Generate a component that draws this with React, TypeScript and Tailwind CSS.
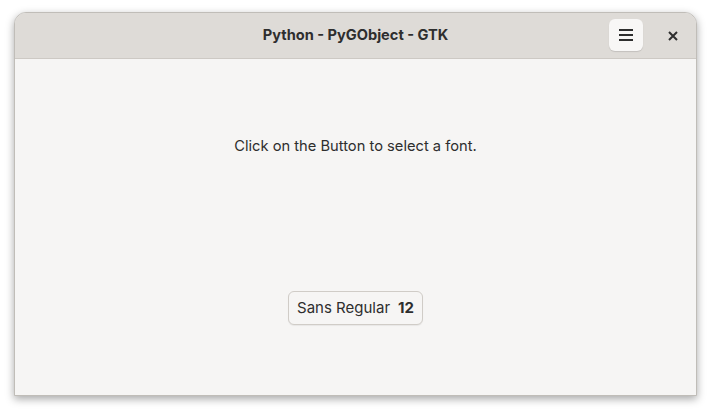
import React from "react";

const App: React.FC = () => {
  return (
    <div className="w-[711px] h-[413px] bg-white pt-[12px] pl-[14px] font-['Inter',sans-serif]">
      <div className="w-[683px] h-[384px] rounded-t-[12px] overflow-hidden flex flex-col bg-[#f6f5f4] border border-[#c0bdb8] shadow-[0_3px_9px_rgba(0,0,0,0.35)]">
        <header className="h-[46px] shrink-0 bg-[#dedbd7] border-b border-[#cdc9c4] flex items-center relative">
          <h1 className="w-full text-center text-[14.6px] font-bold text-[#2e2e2e]">
            Python - PyGObject - GTK
          </h1>
          <button className="absolute left-[594px] top-[6px] w-[34px] h-[32px] rounded-[6px] bg-[#f8f7f6] shadow-[0_1px_1px_rgba(0,0,0,0.12)] flex items-center justify-center">
            <svg width="14" height="12" viewBox="0 0 14 12">
              <path d="M0 1h14M0 6h14M0 11h14" stroke="#2e2e2e" strokeWidth="2" />
            </svg>
          </button>
          <button className="absolute left-[648px] top-[13px] w-[20px] h-[20px] flex items-center justify-center">
            <svg width="10" height="10" viewBox="0 0 10 10">
              <path d="M1 1l8 8M9 1l-8 8" stroke="#2e2e2e" strokeWidth="2" />
            </svg>
          </button>
        </header>
        <main className="flex-1 flex flex-col items-center">
          <p className="mt-[76px] text-[14.7px] text-[#2e2e2e]">
            Click on the Button to select a font.
          </p>
          <button className="mt-[134px] w-[135px] h-[34px] rounded-[6px] border border-[#d0ccc7] bg-[#f6f5f4] shadow-[0_1px_1px_rgba(0,0,0,0.06)] flex items-center justify-center gap-[8px] text-[15px] text-[#2e2e2e]">
            <span>Sans Regular</span>
            <span className="font-bold">12</span>
          </button>
        </main>
      </div>
    </div>
  );
};

export default App;
